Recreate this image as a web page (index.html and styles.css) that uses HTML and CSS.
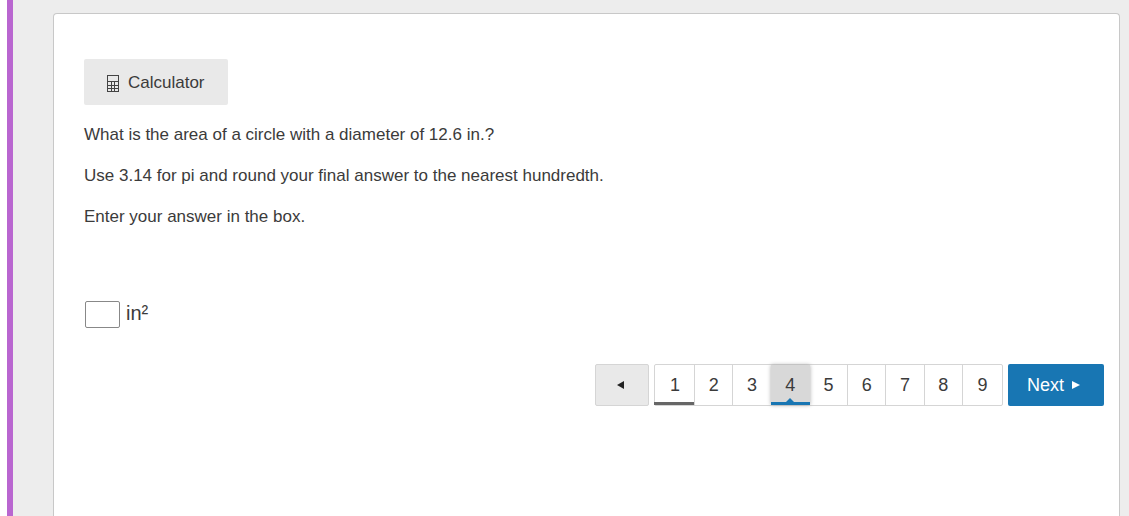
FILE: index.html
```
<!doctype html>
<html lang="en">
	<head>
		<title>Area of a Circle</title>
		<meta charset="utf-8">
		<meta name="viewport" content="width=device-width">
		<link rel="stylesheet" href="styles.css">
	</head>
	<body>
		<main class="card">
			<button type="button" class="calculator">
				<svg width="12" height="20" viewBox="0 -3 12 20" fill="none" stroke="#444" shape-rendering="crispEdges" aria-hidden="true">
					<rect x="0.5" y="0.5" width="11" height="16"/>
					<path d="M1 6.5h10M1 10.5h10M1 13.5h10M4.5 7v9M7.5 7v9"/>
				</svg>
				Calculator
			</button>
			<div class="question">
				<p>What is the area of a circle with a diameter of 12.6 in.?</p>
				<p>Use 3.14 for pi and round your final answer to the nearest hundredth.</p>
				<p>Enter your answer in the box.</p>
			</div>
			<div class="answer">
				<input type="text" id="answer">
				<label for="answer">in²</label>
			</div>
			<nav class="pager">
				<button type="button" class="prev" aria-label="Previous">
					<svg width="8" height="8" viewBox="0 0 8 8" fill="#222"><path d="M0 4l7-4v8z"/></svg>
				</button>
				<ol class="pages">
					<li><a href="#1" class="done">1</a></li>
					<li><a href="#2">2</a></li>
					<li><a href="#3">3</a></li>
					<li><a href="#4" class="current">4</a></li>
					<li><a href="#5">5</a></li>
					<li><a href="#6">6</a></li>
					<li><a href="#7">7</a></li>
					<li><a href="#8">8</a></li>
					<li><a href="#9">9</a></li>
				</ol>
				<button type="button" class="next">
					Next
					<svg width="8" height="8" viewBox="0 0 8 8" fill="#fff" aria-hidden="true"><path d="M8 4l-8-4v8z"/></svg>
				</button>
			</nav>
		</main>
	</body>
</html>
```

FILE: styles.css
```
* {
	box-sizing: border-box;
}
html {
	height: 100%;
	padding-left: 7px;
	background: #fff;
}
body {
	display: flex;
	min-height: 100%;
	margin: 0;
	padding: 13px 9px 0 40px;
	border-left: 6px solid #b966d0;
	background: #ededed;
	color: #3b3b3b;
	font: 17px/25px "Liberation Sans", Arial, sans-serif;
}
button, input {
	color: inherit;
	font: inherit;
}
button {
	display: flex;
	align-items: center;
	justify-content: center;
	border: 0;
	border-radius: 2px;
	cursor: pointer;
}
.card {
	flex: 1;
	padding: 45px 15px 30px 30px;
	border: 1px solid #c8c8c8;
	border-bottom: 0;
	border-radius: 4px 4px 0 0;
	background: #fff;
}
.calculator {
	gap: 9px;
	height: 46px;
	padding: 0 23px;
	background: #e9e9e9;
}
.question {
	margin-top: 17px;
}
.question p {
	margin: 16px 0;
}
.answer {
	display: flex;
	align-items: center;
	gap: 6px;
	margin-top: 71px;
	padding-left: 1px;
	font-size: 20px;
}
.answer input {
	width: 35px;
	height: 27px;
	padding: 2px 4px;
	border: 1px solid #888;
	border-radius: 2px;
}
.answer label {
	line-height: 27px;
	padding-bottom: 2px;
}
.pager {
	display: flex;
	justify-content: flex-end;
	gap: 5px;
	margin-top: 35px;
	font-size: 18px;
}
.prev {
	width: 54px;
	padding: 0 8px 0 6px;
	border: 1px solid #d5d5d5;
	background: #e9e9e9;
}
.pages {
	display: flex;
	width: 349px;
	height: 42px;
	margin: 0;
	padding: 0;
	border: 1px solid #d5d5d5;
	border-radius: 2px;
	list-style: none;
}
.pages li {
	display: flex;
	flex: 1;
}
.pages li:first-child {
	flex: 0 0 39px;
}
.pages li:last-child {
	flex: 0 0 40px;
}
.pages li + li {
	border-left: 1px solid #d5d5d5;
}
.pages a {
	display: flex;
	flex: 1;
	align-items: center;
	justify-content: center;
	color: inherit;
	text-decoration: none;
}
.pages .done {
	margin-left: -1px;
	padding-left: 2px;
	box-shadow: inset 0 -3px #666;
}
.pages .current {
	position: relative;
	margin: 0 -1px;
	background: #d8d8d8;
	box-shadow: inset 0 -3px #1876b3, 0 0 4px #aaa;
}
.pages .current::after {
	position: absolute;
	bottom: 3px;
	left: 50%;
	margin-left: -4px;
	border: 4px solid transparent;
	border-top: 0;
	border-bottom-color: #1876b3;
	content: "";
}
.next {
	gap: 8px;
	width: 96px;
	padding: 0 5px 0 0;
	background: #1876b3;
	color: #fff;
}
```
